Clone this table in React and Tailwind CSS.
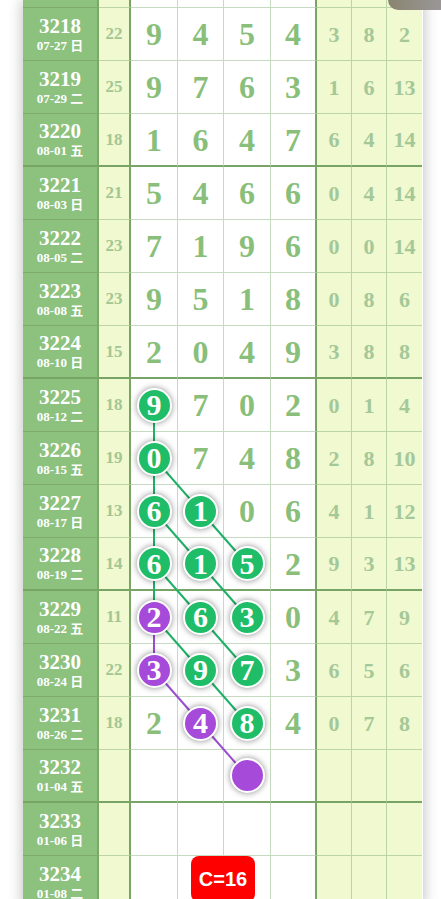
import React from 'react';

const rows = [
  { no: '3218', date: '07-27 日', sum: 22, d: [9, 4, 5, 4], r: [3, 8, 2] },
  { no: '3219', date: '07-29 二', sum: 25, d: [9, 7, 6, 3], r: [1, 6, 13] },
  { no: '3220', date: '08-01 五', sum: 18, d: [1, 6, 4, 7], r: [6, 4, 14] },
  { no: '3221', date: '08-03 日', sum: 21, d: [5, 4, 6, 6], r: [0, 4, 14] },
  { no: '3222', date: '08-05 二', sum: 23, d: [7, 1, 9, 6], r: [0, 0, 14] },
  { no: '3223', date: '08-08 五', sum: 23, d: [9, 5, 1, 8], r: [0, 8, 6] },
  { no: '3224', date: '08-10 日', sum: 15, d: [2, 0, 4, 9], r: [3, 8, 8] },
  { no: '3225', date: '08-12 二', sum: 18, d: [9, 7, 0, 2], r: [0, 1, 4] },
  { no: '3226', date: '08-15 五', sum: 19, d: [0, 7, 4, 8], r: [2, 8, 10] },
  { no: '3227', date: '08-17 日', sum: 13, d: [6, 1, 0, 6], r: [4, 1, 12] },
  { no: '3228', date: '08-19 二', sum: 14, d: [6, 1, 5, 2], r: [9, 3, 13] },
  { no: '3229', date: '08-22 五', sum: 11, d: [2, 6, 3, 0], r: [4, 7, 9] },
  { no: '3230', date: '08-24 日', sum: 22, d: [3, 9, 7, 3], r: [6, 5, 6] },
  { no: '3231', date: '08-26 二', sum: 18, d: [2, 4, 8, 4], r: [0, 7, 8] },
  { no: '3232', date: '01-04 五', sum: '', d: ['', '', '', ''], r: ['', '', ''] },
  { no: '3233', date: '01-06 日', sum: '', d: ['', '', '', ''], r: ['', '', ''] },
  { no: '3234', date: '01-08 二', sum: '', d: ['', '', '', ''], r: ['', '', ''] },
];

// 球: [行号, 列] -> 颜色 (g 绿 / p 紫)
const balls = {
  '7-0': 'g', '8-0': 'g',
  '9-0': 'g', '9-1': 'g',
  '10-0': 'g', '10-1': 'g', '10-2': 'g',
  '11-0': 'p', '11-1': 'g', '11-2': 'g',
  '12-0': 'p', '12-1': 'g', '12-2': 'g',
  '13-1': 'p', '13-2': 'g',
  '14-2': 'p',
};

const links = [
  [7, 0, 8, 0, 'g'], [8, 0, 9, 0, 'g'], [8, 0, 9, 1, 'g'],
  [9, 0, 10, 0, 'g'], [9, 0, 10, 1, 'g'], [9, 1, 10, 2, 'g'],
  [10, 0, 11, 0, 'g'], [10, 0, 11, 1, 'g'], [10, 1, 11, 2, 'g'],
  [11, 0, 12, 1, 'g'], [11, 1, 12, 2, 'g'], [12, 1, 13, 2, 'g'],
  [11, 0, 12, 0, 'p'], [12, 0, 13, 1, 'p'], [13, 1, 14, 2, 'p'],
];

const colX = [131, 177.5, 224, 270];
const rowY = (i) => 8 + 53 * i + 26;

const serif = "font-['Liberation_Serif','Noto_Sans_CJK_SC',serif] font-bold";

function Ball({ color, value }) {
  const bg = color === 'p' ? 'bg-[#a64bd9]' : 'bg-[#20bd68]';
  return (
    <div className={`relative z-20 w-[35px] h-[35px] rounded-full border-2 border-white shadow-[0_0_6px_rgba(0,0,0,0.45)] flex items-center justify-center text-white text-[30px] leading-none ${bg}`}>
      {value}
    </div>
  );
}

function Row({ row, idx, partial }) {
  const groupEnd = idx % 4 === 2;
  const h = partial ? 'h-[8px]' : 'h-[53px]';
  const bGreen = groupEnd ? 'border-b-2 border-b-[#78a565]' : 'border-b border-b-[#7eab6c]';
  const bWhite = groupEnd ? 'border-b-2 border-b-[#78a565]' : 'border-b border-b-[#c6dac1]';
  const bRight = groupEnd ? 'border-b-2 border-b-[#78a565]' : 'border-b border-b-[#bcd5a6]';
  const whiteW = ['w-[47px]', 'w-[46px]', 'w-[47px]', 'w-[46px]'];
  const whiteR = [
    'border-r border-r-[#c6dac1]',
    'border-r border-r-[#c6dac1]',
    'border-r border-r-[#c6dac1]',
    'border-r-2 border-r-[#78a565]',
  ];
  const rightW = ['w-[35px] border-r border-r-[#bcd5a6]', 'w-[35px] border-r border-r-[#bcd5a6]', 'w-[35px]'];

  return (
    <div className={`flex ${h} ${serif}`}>
      <div className={`w-[76px] bg-[#8dc17e] border-r-2 border-r-[#7aa968] ${bGreen} flex flex-col items-center justify-center text-white`}>
        {!partial && (
          <>
            <div className="text-[21px] leading-[22px]">{row.no}</div>
            <div className="text-[13px] leading-[17px]">{row.date}</div>
          </>
        )}
      </div>
      <div className={`w-[32px] bg-[#f0f9cf] border-r-2 border-r-[#78a565] ${bRight} flex items-center justify-center text-[17px] text-[#a3c693]`}>
        {!partial && row.sum}
      </div>
      {[0, 1, 2, 3].map((c) => {
        const ball = balls[`${idx}-${c}`];
        return (
          <div key={c} className={`${whiteW[c]} bg-white ${whiteR[c]} ${bWhite} flex items-center justify-center text-[32px] text-[#89bf7a]`}>
            {!partial && (ball ? <Ball color={ball} value={row.d[c]} /> : row.d[c])}
          </div>
        );
      })}
      {[0, 1, 2].map((c) => (
        <div key={c} className={`${rightW[c]} bg-[#f0f9cf] ${bRight} flex items-center justify-center text-[22px] text-[#a5c899]`}>
          {!partial && row.r[c]}
        </div>
      ))}
    </div>
  );
}

export default function App() {
  return (
    <div className="relative h-[899px] w-[441px] overflow-hidden bg-white">
      <div className="relative ml-[23px] w-[400px] shadow-[0_0_14px_rgba(0,0,0,0.28)]">
        <Row row={{}} idx={-1} partial />
        {rows.map((row, i) => (
          <Row key={row.no} row={row} idx={i} />
        ))}
        <svg className="absolute left-0 top-0 z-10 pointer-events-none" width="400" height="960">
          {links.map(([r1, c1, r2, c2, col], i) => (
            <line
              key={i}
              x1={colX[c1]}
              y1={rowY(r1)}
              x2={colX[c2]}
              y2={rowY(r2)}
              stroke={col === 'p' ? '#9a4fcf' : '#1fb067'}
              strokeWidth="2"
            />
          ))}
        </svg>
        <div className="absolute left-[168px] top-[856px] z-30 w-[64px] h-[46px] rounded-lg bg-[#ff0000] flex items-center justify-center text-white text-[20px] font-bold font-['Liberation_Sans',sans-serif]">
          C=16
        </div>
      </div>
      <div className="absolute right-0 top-0 z-40 w-[53px] h-[10px] rounded-bl-[12px] bg-gradient-to-r from-[#8a8570] to-[#9a9697]" />
    </div>
  );
}
